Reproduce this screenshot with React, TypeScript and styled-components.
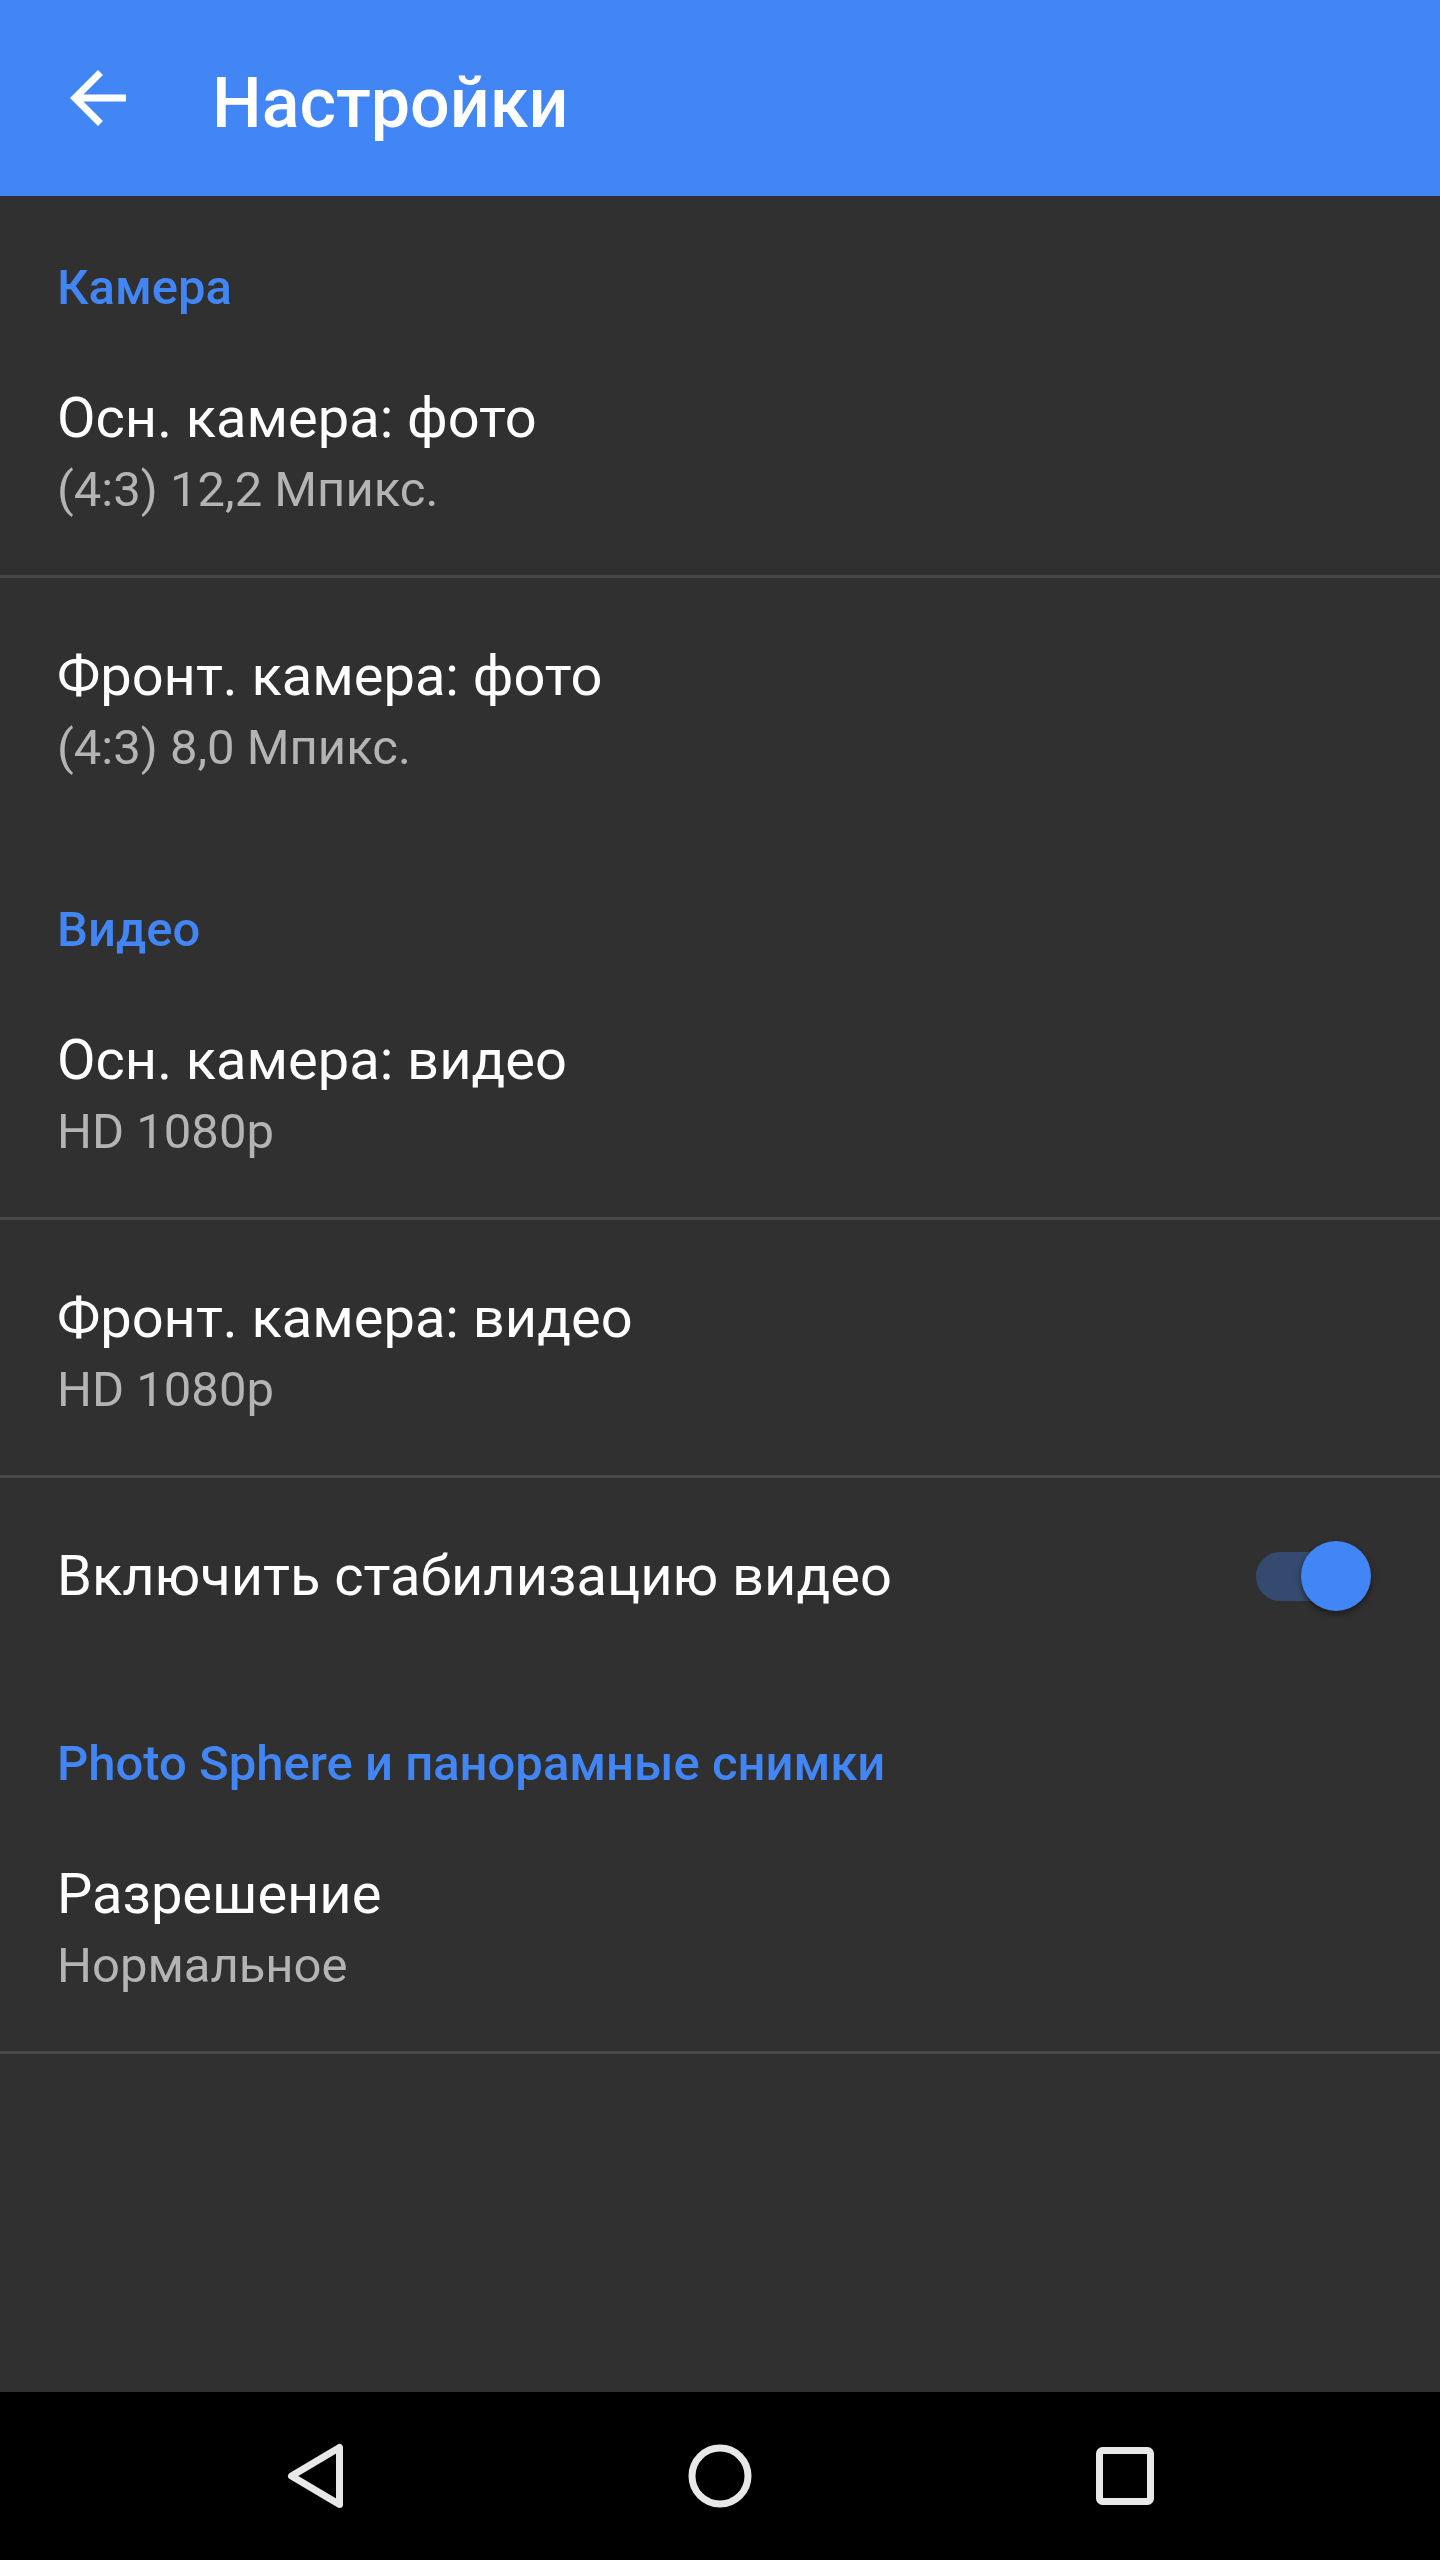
import styled, { createGlobalStyle } from 'styled-components';

const GlobalStyle = createGlobalStyle`
  html, body {
    margin: 0;
    padding: 0;
    background: #303030;
  }

  body {
    font-family: Roboto, "Noto Sans", "Liberation Sans", sans-serif;
    -webkit-font-smoothing: antialiased;
  }
`;

const Page = styled.div`
  min-height: 2560px;
  display: flex;
  flex-direction: column;
  background: #303030;
`;

const Toolbar = styled.header`
  height: 196px;
  flex-shrink: 0;
  display: flex;
  align-items: center;
  padding-left: 56px;
  background: #4285f4;
  box-sizing: border-box;

  h1 {
    margin: 0 0 0 72px;
    padding-top: 9px;
    font: 500 70px/70px Roboto, sans-serif;
    color: #ffffff;
  }
`;

const BackIcon = styled.svg`
  width: 84px;
  height: 84px;
  display: block;
  fill: #ffffff;
`;

const List = styled.main`
  flex: 1;
  display: flex;
  flex-direction: column;
`;

const Category = styled.div<{ $first?: boolean }>`
  height: ${p => (p.$first ? 124 : 129)}px;
  box-sizing: border-box;
  padding: ${p => (p.$first ? 67 : 72)}px 57px 0;
  font: 500 49px/49px Roboto, sans-serif;
  color: #4285f4;
`;

const Item = styled.div<{ $divider?: boolean; $single?: boolean }>`
  height: ${p => (p.$single ? 189 : 255) + (p.$divider ? 3 : 0)}px;
  box-sizing: border-box;
  padding: 70px 57px 0;
  display: flex;
  align-items: flex-start;
  justify-content: space-between;
  border-bottom: ${p => (p.$divider ? '3px solid #484848' : 'none')};
`;

const Texts = styled.div`
  display: flex;
  flex-direction: column;
`;

const Title = styled.div`
  font: 400 56px/56px Roboto, sans-serif;
  color: #ffffff;
`;

const Summary = styled.div`
  margin-top: 19px;
  font: 400 49px/49px Roboto, sans-serif;
  color: #b4b4b4;
`;

const Switch = styled.div`
  position: relative;
  width: 116px;
  height: 70px;
  margin-right: 11px;
  margin-top: -7px;
  display: flex;
  align-items: center;
`;

const Track = styled.div`
  width: 106px;
  height: 49px;
  border-radius: 25px;
  background: #344b6f;
`;

const Thumb = styled.div`
  position: absolute;
  top: 0;
  left: 45px;
  width: 70px;
  height: 70px;
  border-radius: 50%;
  background: #4285f4;
  box-shadow: 0 3px 6px rgba(0, 0, 0, 0.45);
`;

const NavBar = styled.nav`
  height: 168px;
  flex-shrink: 0;
  display: flex;
  justify-content: center;
  align-items: center;
  background: #000000;
`;

const NavButton = styled.div`
  width: 405px;
  display: flex;
  justify-content: center;
  align-items: center;

  svg {
    width: 72px;
    height: 72px;
    display: block;
    fill: none;
    stroke: #e8e8e8;
    stroke-width: 7;
    stroke-linejoin: round;
  }
`;

type Pref = { title: string; summary?: string; divider?: boolean; toggle?: boolean };

const sections: { name: string; items: Pref[] }[] = [
  {
    name: 'Камера',
    items: [
      { title: 'Осн. камера: фото', summary: '(4:3) 12,2 Мпикс.', divider: true },
      { title: 'Фронт. камера: фото', summary: '(4:3) 8,0 Мпикс.' },
    ],
  },
  {
    name: 'Видео',
    items: [
      { title: 'Осн. камера: видео', summary: 'HD 1080p', divider: true },
      { title: 'Фронт. камера: видео', summary: 'HD 1080p', divider: true },
      { title: 'Включить стабилизацию видео', toggle: true },
    ],
  },
  {
    name: 'Photo Sphere и панорамные снимки',
    items: [{ title: 'Разрешение', summary: 'Нормальное', divider: true }],
  },
];

const App = () => {
  return (
    <Page>
      <GlobalStyle />
      <Toolbar>
        <BackIcon viewBox="0 0 24 24">
          <path d="M20 11H7.83l5.59-5.59L12 4l-8 8 8 8 1.41-1.41L7.83 13H20v-2z" />
        </BackIcon>
        <h1>Настройки</h1>
      </Toolbar>

      <List>
        {sections.map((section, i) => (
          <div key={section.name}>
            <Category $first={i === 0}>{section.name}</Category>
            {section.items.map(item => (
              <Item key={item.title} $divider={item.divider} $single={!item.summary}>
                <Texts>
                  <Title>{item.title}</Title>
                  {item.summary && <Summary>{item.summary}</Summary>}
                </Texts>
                {item.toggle && (
                  <Switch>
                    <Track />
                    <Thumb />
                  </Switch>
                )}
              </Item>
            ))}
          </div>
        ))}
      </List>

      <NavBar>
        <NavButton>
          <svg viewBox="0 0 72 72">
            <path d="M60.5 7.5 L60.5 64.5 L12.5 36 Z" />
          </svg>
        </NavButton>
        <NavButton>
          <svg viewBox="0 0 72 72">
            <circle cx="36" cy="36" r="28" />
          </svg>
        </NavButton>
        <NavButton>
          <svg viewBox="0 0 72 72">
            <rect x="10.5" y="10.5" width="51" height="51" rx="3" />
          </svg>
        </NavButton>
      </NavBar>
    </Page>
  );
};

export default App;
